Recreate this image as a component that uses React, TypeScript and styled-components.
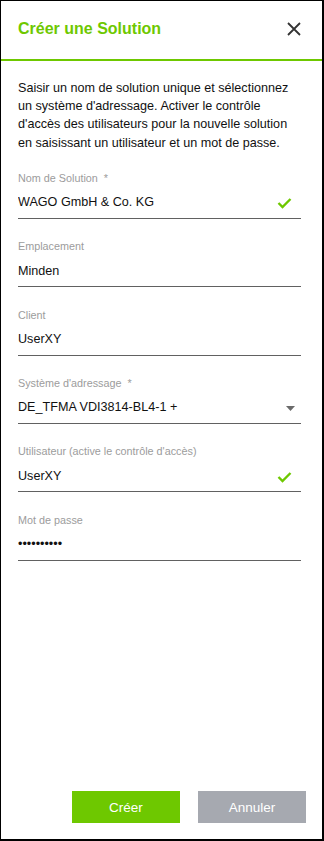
import styled, { createGlobalStyle } from "styled-components";

const GlobalStyle = createGlobalStyle`
  html, body {
    margin: 0;
    padding: 0;
    background: #ffffff;
  }
  * {
    box-sizing: border-box;
  }
`;

const GREEN = "#6ec800";

const Dialog = styled.div`
  width: 324px;
  height: 841px;
  display: flex;
  flex-direction: column;
  background: #ffffff;
  border-style: solid;
  border-color: #000000;
  border-width: 1px 2px 2px 1px;
  font-family: "Liberation Sans", Arial, sans-serif;
  color: #111111;
`;

const Header = styled.div`
  height: 60px;
  display: flex;
  align-items: center;
  justify-content: space-between;
  padding: 0 21px 2px 17px;
  border-bottom: 2px solid ${GREEN};
`;

const Title = styled.h1`
  margin: 0;
  font-size: 16px;
  line-height: 20px;
  font-weight: 700;
  color: ${GREEN};
`;

const CloseButton = styled.button`
  width: 14px;
  height: 14px;
  padding: 0;
  margin: 0 0 1px 0;
  border: none;
  background: none;
  cursor: pointer;
  display: flex;
  align-items: center;
  justify-content: center;
`;

const Body = styled.div`
  padding: 18px 21px 0 17px;
  display: flex;
  flex-direction: column;
`;

const Description = styled.p`
  margin: 0 0 19px 0;
  font-size: 12.6px;
  line-height: 18.2px;
  color: #111111;
`;

const Field = styled.div`
  display: flex;
  flex-direction: column;
  margin-bottom: 20.4px;
`;

const Label = styled.label`
  font-size: 10.8px;
  line-height: 14px;
  color: #9c9c9c;
`;

const Required = styled.span`
  margin-left: 6px;
`;

const InputRow = styled.div`
  height: 34px;
  display: flex;
  align-items: center;
  padding-top: 2px;
  border-bottom: 1px solid #616161;
`;

const Input = styled.input`
  flex: 1;
  min-width: 0;
  border: none;
  outline: none;
  padding: 0;
  margin: 0;
  background: transparent;
  font-family: "Liberation Sans", Arial, sans-serif;
  font-size: 12.6px;
  color: #111111;
`;

const SelectValue = styled.div`
  flex: 1;
  font-size: 12.6px;
  color: #111111;
`;

const Adornment = styled.span<{ $right: number }>`
  display: flex;
  align-items: center;
  margin-right: ${(p) => p.$right}px;
  margin-top: 2px;
`;

const Footer = styled.div`
  margin-top: auto;
  display: flex;
  justify-content: flex-end;
  gap: 18px;
  padding: 0 16px 16px 0;
`;

const Button = styled.button<{ $variant: "primary" | "secondary" }>`
  width: 108px;
  height: 32px;
  border: none;
  padding: 0;
  font-family: "Liberation Sans", Arial, sans-serif;
  font-size: 13.5px;
  color: #ffffff;
  cursor: pointer;
  background: ${(p) => (p.$variant === "primary" ? GREEN : "#a6a9b0")};
`;

function Check() {
  return (
    <svg width="15" height="12" viewBox="0 0 15 12">
      <polyline
        points="1.5,6 5.5,10 13.5,2"
        fill="none"
        stroke={GREEN}
        strokeWidth="2.4"
      />
    </svg>
  );
}

function Caret() {
  return (
    <svg width="9" height="5" viewBox="0 0 9 5">
      <polygon points="0,0 9,0 4.5,5" fill="#6a6a6a" />
    </svg>
  );
}

function CloseIcon() {
  return (
    <svg width="14" height="14" viewBox="0 0 14 14">
      <path d="M1 1 L13 13 M13 1 L1 13" stroke="#333333" strokeWidth="1.8" />
    </svg>
  );
}

export default function App() {
  return (
    <>
      <GlobalStyle />
      <Dialog>
        <Header>
          <Title>Créer une Solution</Title>
          <CloseButton aria-label="Fermer">
            <CloseIcon />
          </CloseButton>
        </Header>
        <Body>
          <Description>
            Saisir un nom de solution unique et sélectionnez un système
            d'adressage. Activer le contrôle d'accès des utilisateurs pour la
            nouvelle solution en saisissant un utilisateur et un mot de passe.
          </Description>

          <Field>
            <Label>
              Nom de Solution<Required>*</Required>
            </Label>
            <InputRow>
              <Input readOnly value="WAGO GmbH & Co. KG" />
              <Adornment $right={9}>
                <Check />
              </Adornment>
            </InputRow>
          </Field>

          <Field>
            <Label>Emplacement</Label>
            <InputRow>
              <Input readOnly value="Minden" />
            </InputRow>
          </Field>

          <Field>
            <Label>Client</Label>
            <InputRow>
              <Input readOnly value="UserXY" />
            </InputRow>
          </Field>

          <Field>
            <Label>
              Système d'adressage<Required>*</Required>
            </Label>
            <InputRow>
              <SelectValue>DE_TFMA VDI3814-BL4-1 +</SelectValue>
              <Adornment $right={6}>
                <Caret />
              </Adornment>
            </InputRow>
          </Field>

          <Field>
            <Label>Utilisateur (active le contrôle d'accès)</Label>
            <InputRow>
              <Input readOnly value="UserXY" />
              <Adornment $right={9}>
                <Check />
              </Adornment>
            </InputRow>
          </Field>

          <Field>
            <Label>Mot de passe</Label>
            <InputRow>
              <Input readOnly type="password" value="motdepasse" />
            </InputRow>
          </Field>
        </Body>
        <Footer>
          <Button $variant="primary">Créer</Button>
          <Button $variant="secondary">Annuler</Button>
        </Footer>
      </Dialog>
    </>
  );
}
